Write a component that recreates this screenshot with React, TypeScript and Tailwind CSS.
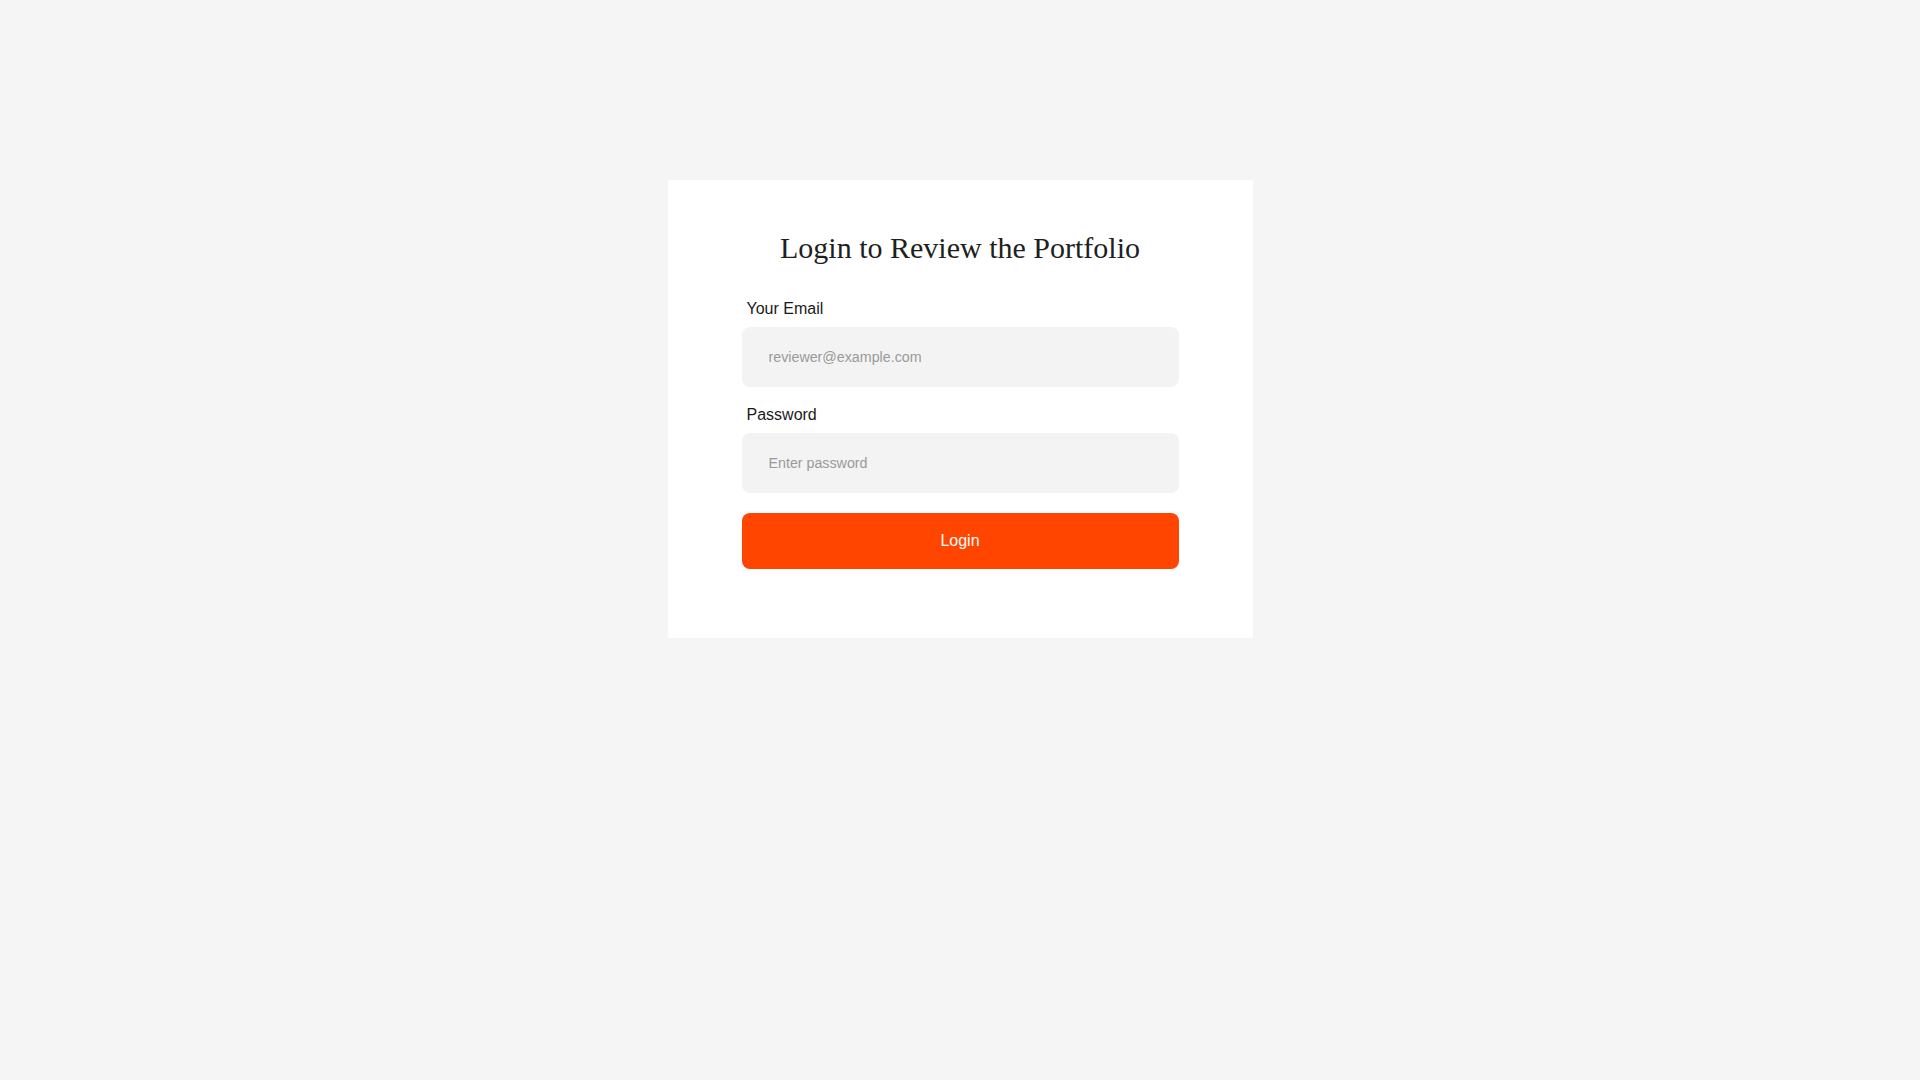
import React, { useState } from 'react';

// login card for the portfolio review page
export default function App() {
  const [email, setEmail] = useState('');
  const [password, setPassword] = useState('');

  return (
    <div className="min-h-screen w-full bg-[#f5f5f5] pt-[180px] font-['Liberation_Sans',Arial,sans-serif]">
      <div className="mx-auto w-[585px] bg-white px-[74px] pt-[50px] pb-[69px]">
        <h2 className="text-center font-['Liberation_Serif','Times_New_Roman',serif] text-[30px] leading-[36px] font-normal text-[#1f1f1f]">
          Login to Review the Portfolio
        </h2>

        <form onSubmit={(e) => e.preventDefault()} className="flex flex-col">
          {/* email */}
          <div className="mt-[31px] flex flex-col">
            <label className="mb-[6px] pl-[5px] text-[16px] leading-6 text-[#1a1a1a]">Your Email</label>
            <input
              type="email"
              value={email}
              onChange={(e) => setEmail(e.target.value)}
              placeholder="reviewer@example.com"
              className="h-[60px] w-full rounded-lg bg-[#f3f3f3] pl-[27px] pr-[26px] text-[14.25px] text-[#333] placeholder:text-[#9a9a9a] outline-none"
            />
          </div>

          {/* password */}
          <div className="mt-[16px] flex flex-col">
            <label className="mb-[6px] pl-[5px] text-[16px] leading-6 text-[#1a1a1a]">Password</label>
            <input
              type="password"
              value={password}
              onChange={(e) => setPassword(e.target.value)}
              placeholder="Enter password"
              className="h-[60px] w-full rounded-lg bg-[#f3f3f3] pl-[27px] pr-[26px] text-[14.25px] text-[#333] placeholder:text-[#9a9a9a] outline-none"
            />
          </div>

          <button
            type="submit"
            className="mt-[20px] h-[56px] w-full rounded-lg bg-[#ff4500] text-[16px] text-white hover:bg-[#e63e00] transition-colors"
          >
            Login
          </button>
        </form>
      </div>
    </div>
  );
}
